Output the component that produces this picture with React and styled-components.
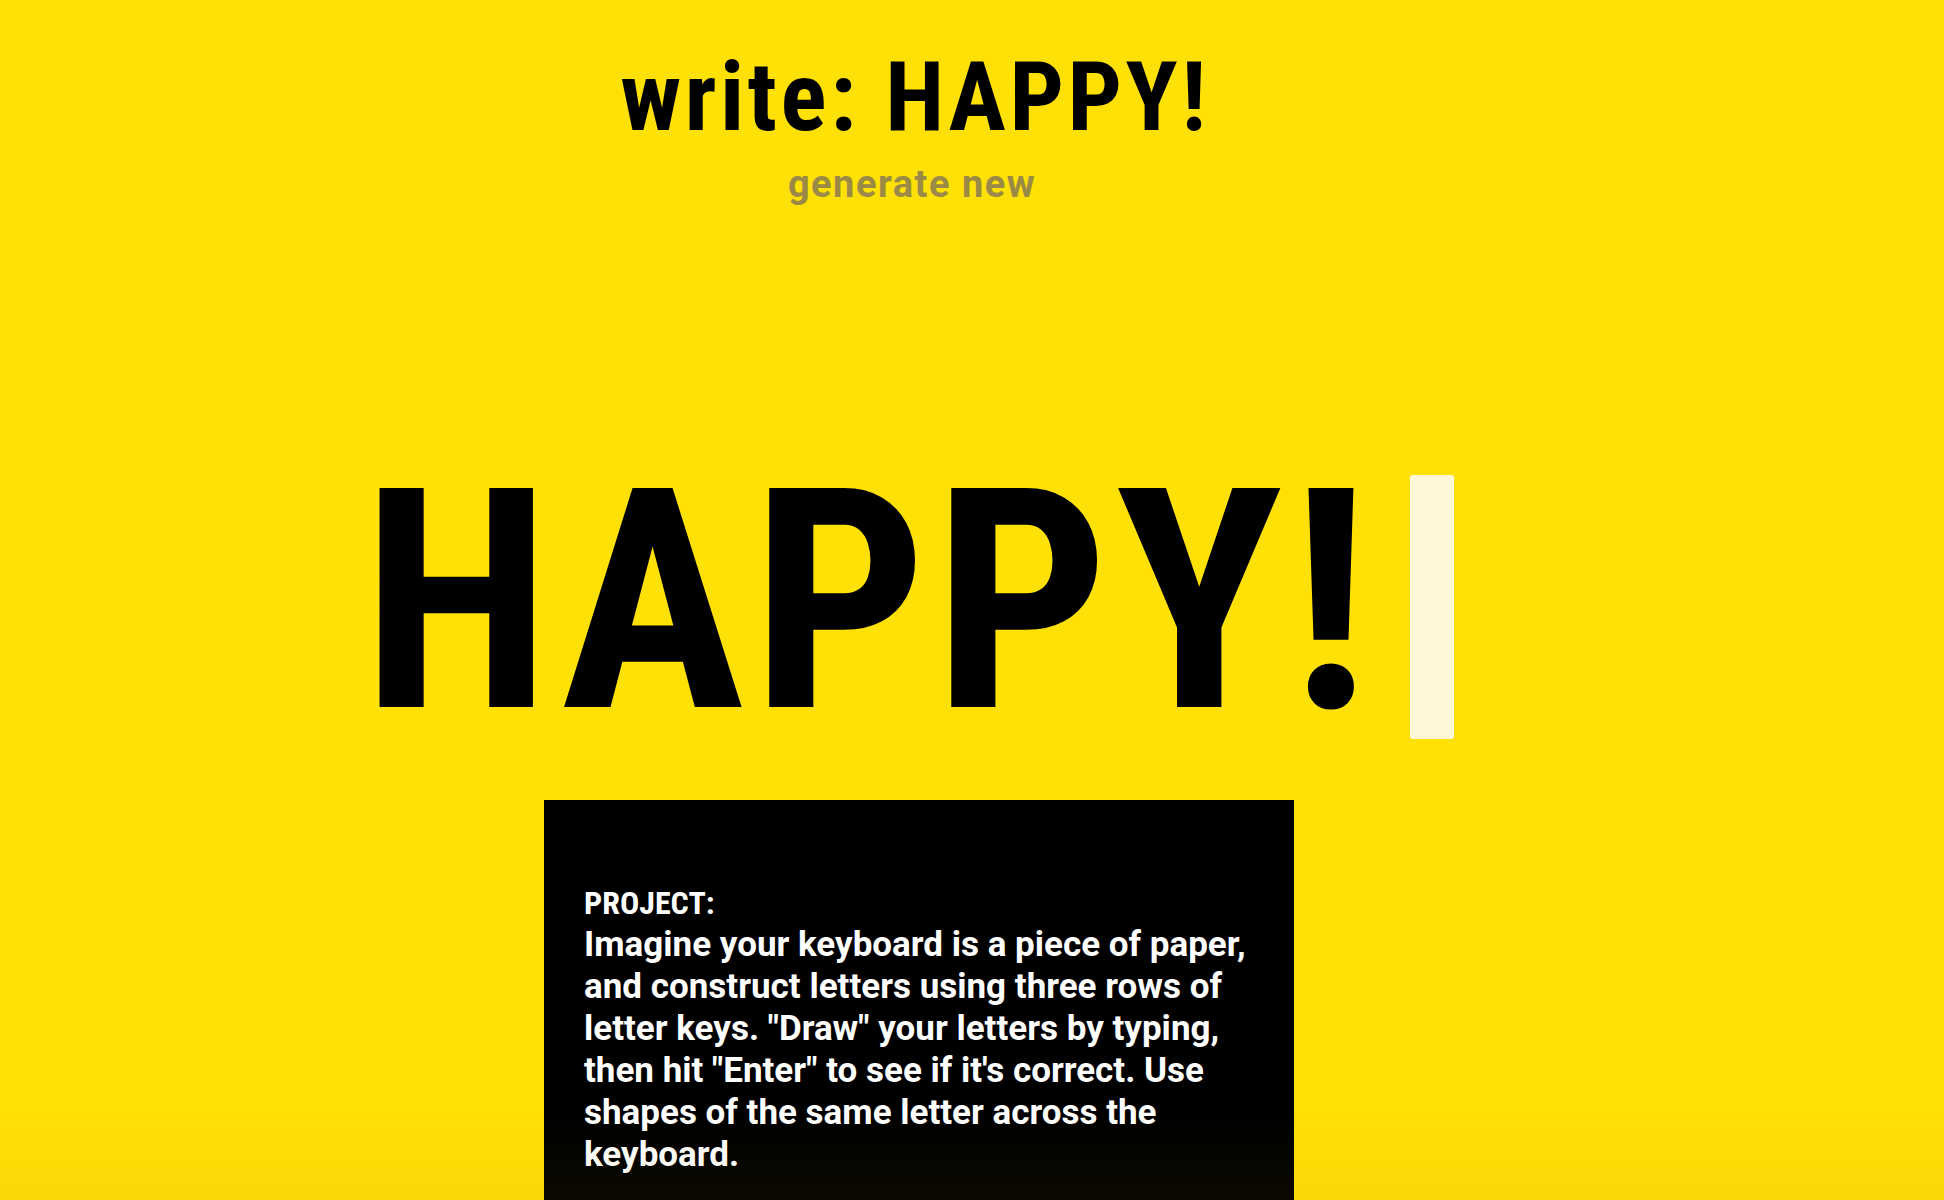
import React from 'react';
import styled, { createGlobalStyle } from 'styled-components';

const GlobalStyle = createGlobalStyle`
  html, body {
    margin: 0;
    padding: 0;
    background-color: #ffe007;
    font-family: Roboto, "Open Sans", sans-serif;
    font-stretch: 78%;
    font-weight: 700;
    overflow: hidden;
  }
  body::after {
    content: '';
    position: fixed;
    left: 0;
    right: 0;
    bottom: 0;
    height: 90px;
    pointer-events: none;
    background: linear-gradient(to bottom, rgba(160, 120, 0, 0) 0%, rgba(160, 120, 0, 0.07) 100%);
  }
`;

const Page = styled.main`
  display: flex;
  flex-direction: column;
  align-items: center;
  padding: 49px 110px 0 0;
  min-height: 100vh;
  box-sizing: border-box;
`;

const Title = styled.h1`
  margin: 0 4px 0 0;
  font-size: 96px;
  font-weight: 700;
  line-height: 1;
  letter-spacing: 3.5px;
  color: #000;
`;

const Generate = styled.a`
  margin: 20px 10px 0 0;
  font-size: 38px;
  font-stretch: 92%;
  line-height: 1;
  letter-spacing: 1.5px;
  color: #9a8a45;
  cursor: pointer;
`;

const Stage = styled.div`
  display: flex;
  align-items: flex-start;
  margin: 245px 18px 0 0;
`;

const BigWord = styled.div`
  font-size: 308px;
  line-height: 1;
  letter-spacing: 7px;
  color: #000;
`;

const Caret = styled.span`
  display: block;
  width: 44px;
  height: 264px;
  margin: 27px 0 0 33px;
  border-radius: 2px;
  background-color: #fff7d6;
`;

const Brief = styled.section`
  margin: 44px 0 0 4px;
  width: 750px;
  box-sizing: border-box;
  padding: 82px 41px 80px 40px;
  background-color: #000;
  color: #fff;
  font-size: 35px;
  font-stretch: 100%;
  line-height: 42px;
`;

const Label = styled.div`
  font-size: 32px;
  font-stretch: 87%;
`;

const Line = styled.span`
  display: block;
  white-space: nowrap;
`;

const lines = [
  'Imagine your keyboard is a piece of paper,',
  'and construct letters using three rows of',
  'letter keys. "Draw" your letters by typing,',
  'then hit "Enter" to see if it\'s correct. Use',
  'shapes of the same letter across the',
  'keyboard.',
];

export default function App() {
  const word = 'HAPPY!';
  return (
    <>
      <GlobalStyle />
      <Page>
        <Title>write: {word}</Title>
        <Generate>generate new</Generate>
        <Stage>
          <BigWord>{word}</BigWord>
          <Caret />
        </Stage>
        <Brief>
          <Label>PROJECT:</Label>
          {lines.map((line, i) => (
            <Line key={i}>{line}</Line>
          ))}
        </Brief>
      </Page>
    </>
  );
}
